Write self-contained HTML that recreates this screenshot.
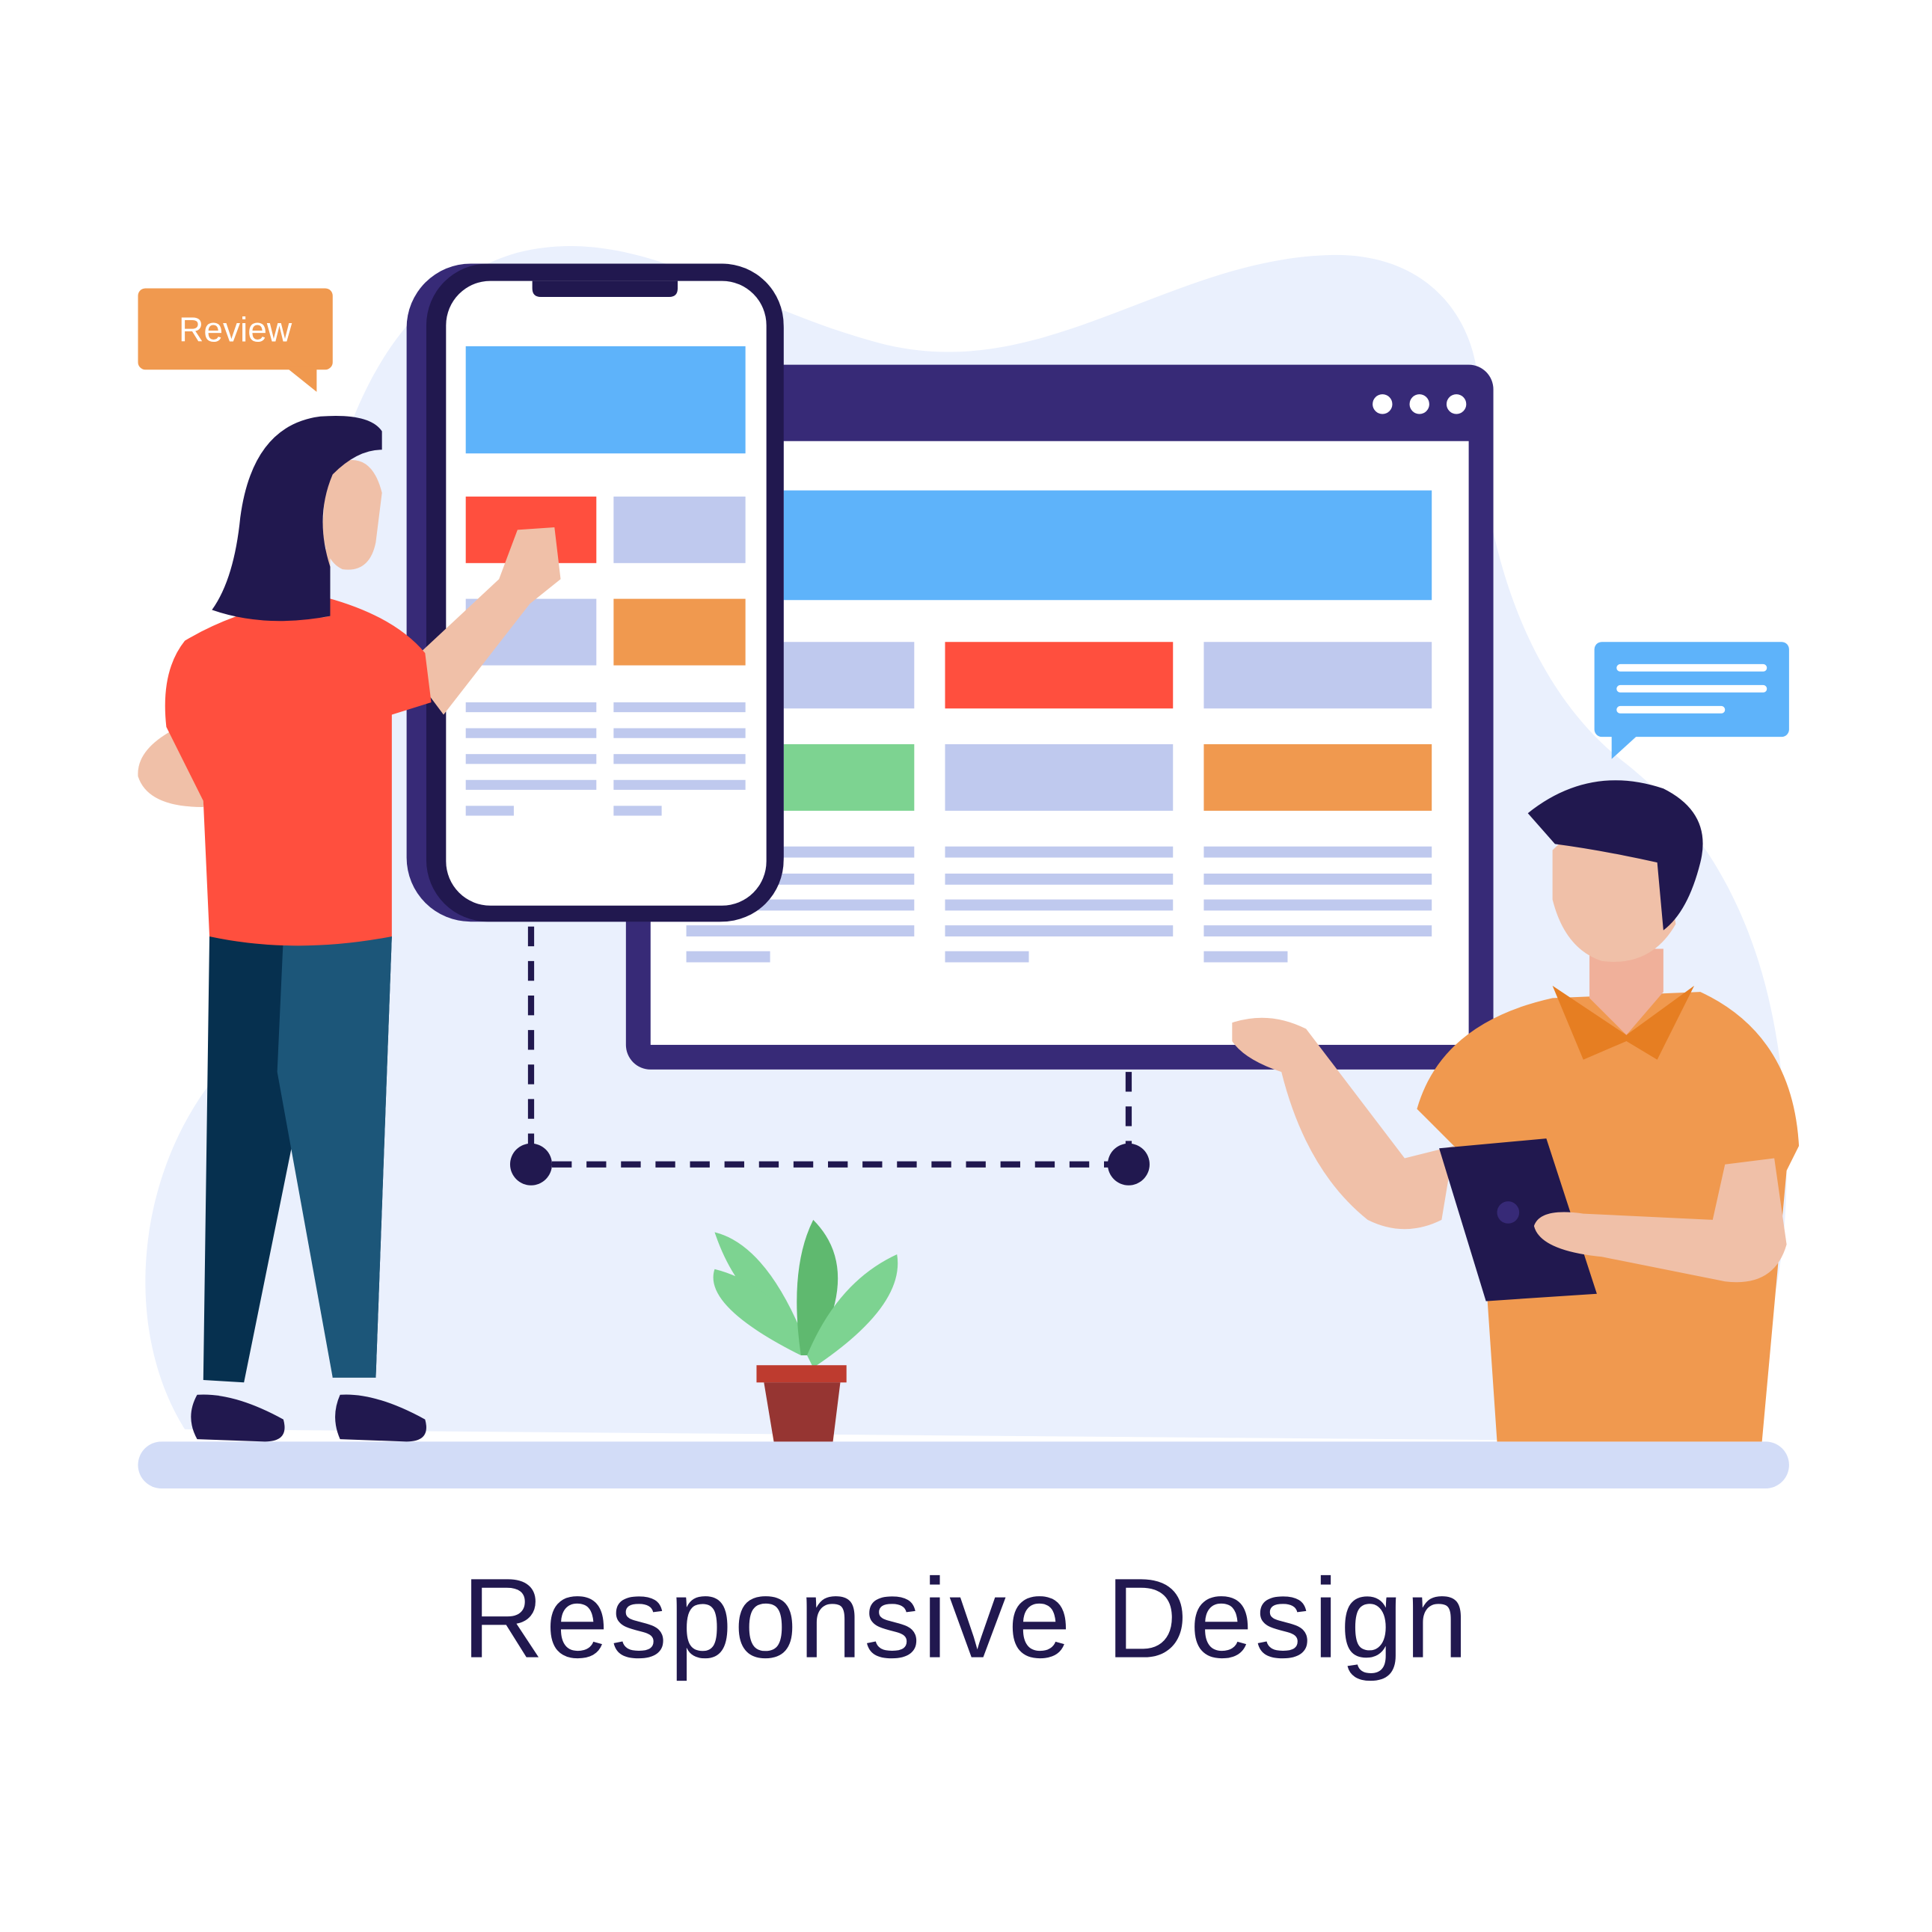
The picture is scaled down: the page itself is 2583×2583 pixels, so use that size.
<!DOCTYPE html>
<html><head><meta charset="utf-8"><style>
html,body{margin:0;padding:0;background:#fff;}
svg{display:block;}
</style></head><body>
<svg width="2583" height="2583" viewBox="0 0 1568 1568" xmlns="http://www.w3.org/2000/svg">
<rect width="1568" height="1568" fill="#fff"/>
<path d="M150 1160 C100 1080 110 960 170 880 C230 780 230 640 250 520 C260 380 300 240 420 205 C520 180 600 250 720 280 C850 310 950 210 1080 207 C1160 205 1200 260 1200 320 C1200 440 1240 560 1320 620 C1420 700 1450 820 1450 950 C1450 1060 1420 1140 1380 1170 Z" fill="#EAF0FD"/>
<rect x="112" y="1170" width="1340" height="38" rx="19" fill="#D2DCF7"/>
<rect x="508" y="296" width="704" height="572" rx="20" fill="#372A77"/>
<rect x="528" y="358" width="664" height="490" fill="#fff"/>
<circle cx="1122" cy="328" r="8" fill="#fff"/><circle cx="1152" cy="328" r="8" fill="#fff"/><circle cx="1182" cy="328" r="8" fill="#fff"/>
<rect x="636" y="398" width="526" height="89" fill="#5EB3FA"/>
<rect x="636" y="521" width="106" height="54" fill="#BFC9EE"/>
<rect x="767" y="521" width="185" height="54" fill="#FF4F3E"/>
<rect x="977" y="521" width="185" height="54" fill="#BFC9EE"/>
<rect x="636" y="604" width="106" height="54" fill="#7DD391"/>
<rect x="767" y="604" width="185" height="54" fill="#BFC9EE"/>
<rect x="977" y="604" width="185" height="54" fill="#F0994F"/>
<g fill="#BFC9EE">
<rect x="557" y="687" width="185" height="9"/><rect x="557" y="709" width="185" height="9"/><rect x="557" y="730" width="185" height="9"/><rect x="557" y="751" width="185" height="9"/><rect x="557" y="772" width="68" height="9"/>
<rect x="767" y="687" width="185" height="9"/><rect x="767" y="709" width="185" height="9"/><rect x="767" y="730" width="185" height="9"/><rect x="767" y="751" width="185" height="9"/><rect x="767" y="772" width="68" height="9"/>
<rect x="977" y="687" width="185" height="9"/><rect x="977" y="709" width="185" height="9"/><rect x="977" y="730" width="185" height="9"/><rect x="977" y="751" width="185" height="9"/><rect x="977" y="772" width="68" height="9"/>
</g>
<rect x="330" y="214" width="306" height="534" rx="52" fill="#372A77"/>
<rect x="346" y="214" width="290" height="534" rx="50" fill="#21184F"/>
<rect x="362" y="228" width="260" height="507" rx="36" fill="#fff"/>
<path d="M432 228 H550 V234 Q550 241 543 241 H439 Q432 241 432 234 Z" fill="#21184F"/>
<rect x="378" y="281" width="227" height="87" fill="#5EB3FA"/>
<rect x="378" y="403" width="106" height="54" fill="#FF4F3E"/>
<rect x="498" y="403" width="107" height="54" fill="#BFC9EE"/>
<rect x="378" y="486" width="106" height="54" fill="#BFC9EE"/>
<rect x="498" y="486" width="107" height="54" fill="#F0994F"/>
<g fill="#BFC9EE">
<rect x="378" y="570" width="106" height="8"/><rect x="378" y="591" width="106" height="8"/><rect x="378" y="612" width="106" height="8"/><rect x="378" y="633" width="106" height="8"/><rect x="378" y="654" width="39" height="8"/>
<rect x="498" y="570" width="107" height="8"/><rect x="498" y="591" width="107" height="8"/><rect x="498" y="612" width="107" height="8"/><rect x="498" y="633" width="107" height="8"/><rect x="498" y="654" width="39" height="8"/>
</g>
<g stroke="#21184F" stroke-width="5" stroke-dasharray="16 12" fill="none">
<path d="M431 752 V930"/><path d="M916 870 V930"/><path d="M448 945 H900"/>
</g>
<circle cx="431" cy="945" r="17" fill="#21184F"/><circle cx="916" cy="945" r="17" fill="#21184F"/>
<rect x="112" y="234" width="158" height="66" rx="6" fill="#F0994F"/>
<path d="M232 298 L257 318 L257 298 Z" fill="#F0994F"/>
<text x="191" y="277" font-family="Liberation Sans, sans-serif" font-size="28" fill="#fff" text-anchor="middle">Review</text>
<rect x="1294" y="521" width="158" height="77" rx="6" fill="#5EB3FA"/>
<path d="M1308 596 L1308 616 L1330 596 Z" fill="#5EB3FA"/>
<g fill="#fff"><rect x="1312" y="539" width="122" height="6" rx="3"/><rect x="1312" y="556" width="122" height="6" rx="3"/><rect x="1312" y="573" width="88" height="6" rx="3"/></g>
<path d="M170 760 L165 1120 L198 1122 L245 890 L270 1118 L305 1118 L318 760 Z" fill="#06304F"/>
<path d="M230 760 L225 870 L270 1118 L305 1118 L318 760 Z" fill="#1C5679"/>
<path d="M160 1132 Q190 1130 230 1152 Q235 1170 215 1170 L160 1168 Q150 1150 160 1132Z" fill="#21184F"/>
<path d="M276 1132 Q305 1130 345 1152 Q350 1170 330 1170 L276 1168 Q268 1150 276 1132Z" fill="#21184F"/>
<path d="M170 580 Q110 600 112 630 Q120 655 165 655 Z" fill="#F0C0A8"/>
<path d="M330 540 L405 470 L420 430 L450 428 L455 470 L430 490 L360 580 Z" fill="#F0C0A8"/>
<path d="M150 520 Q200 490 265 485 Q320 500 345 530 L350 570 L318 580 L318 760 Q240 775 170 760 L165 650 L135 590 Q130 545 150 520Z" fill="#FF4F3E"/>
<path d="M268 440 L268 500 Q248 505 235 492Z" fill="#F0C0A8"/>
<path d="M265 380 Q300 360 310 400 L305 440 Q300 465 278 462 Q262 455 262 425 Z" fill="#F0C0A8"/>
<path d="M310 350 Q300 335 260 338 Q205 345 195 420 Q190 470 172 495 Q215 510 268 500 L268 460 Q255 420 270 385 Q290 365 310 365 Z" fill="#21184F"/>
<path d="M650 1080 Q600 1060 580 1000 Q620 1010 650 1080Z" fill="#7DD391"/>
<path d="M650 1080 Q620 1040 580 1030 Q570 1060 650 1100Z" fill="#7DD391"/>
<path d="M650 1100 Q640 1030 660 990 Q700 1030 660 1100Z" fill="#5FB96F"/>
<path d="M655 1100 Q680 1040 728 1018 Q735 1060 660 1110Z" fill="#7DD391"/>
<rect x="614" y="1108" width="73" height="14" fill="#BE3B2F"/>
<path d="M620 1122 H682 L676 1170 H628 Z" fill="#963532"/>
<path d="M1150 900 Q1170 830 1260 810 L1380 805 Q1455 840 1460 930 L1450 950 L1430 1170 H1215 L1200 950 Z" fill="#F0994F"/>
<path d="M1260 800 L1320 840 L1375 800 L1345 860 L1320 845 L1285 860 Z" fill="#E67E22"/>
<path d="M1290 770 L1290 810 L1320 840 L1350 805 L1350 770 Z" fill="#F0B09A"/>
<path d="M1260 690 Q1300 650 1350 680 L1360 750 Q1340 785 1300 780 Q1270 770 1260 730 Z" fill="#F0C0A8"/>
<path d="M1240 660 Q1290 620 1350 640 Q1390 660 1380 700 Q1370 740 1350 755 L1345 700 Q1300 690 1262 685 Z" fill="#21184F"/>
<path d="M1000 830 Q1030 820 1060 835 L1140 940 L1180 930 L1170 990 Q1140 1005 1110 990 Q1060 950 1040 870 Q1010 860 1000 845Z" fill="#F0C0A8"/>
<path d="M1168 932 L1255 924 L1296 1050 L1206 1056 Z" fill="#21184F"/>
<circle cx="1224" cy="984" r="9" fill="#372A77"/>
<path d="M1440 940 L1450 1010 Q1440 1045 1400 1040 L1300 1020 Q1250 1015 1245 995 Q1250 980 1285 985 L1390 990 L1400 945 Z" fill="#F0C0A8"/>
<text x="784" y="1345" font-family="Liberation Sans, sans-serif" font-size="92" letter-spacing="1.5" fill="#21184F" text-anchor="middle">Responsive Design</text>
</svg>
</body></html>
